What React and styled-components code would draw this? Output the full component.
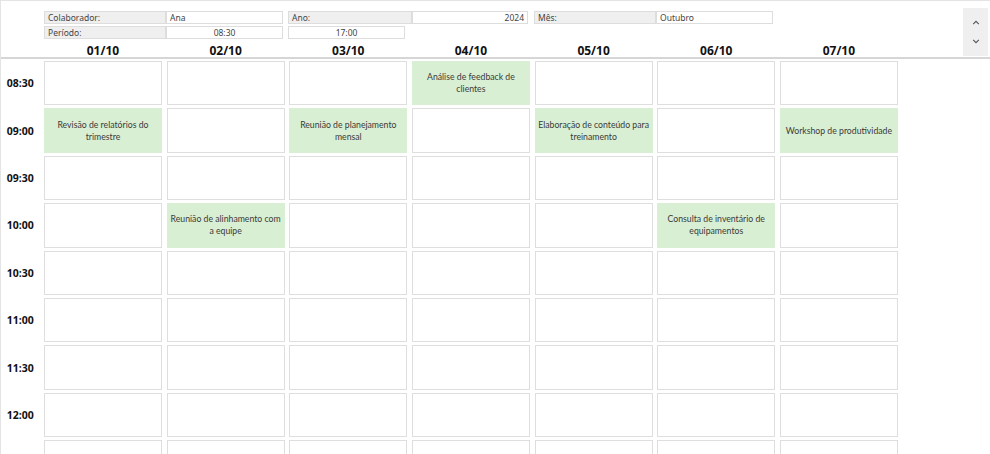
import React from 'react';
import styled, { createGlobalStyle } from 'styled-components';

const GlobalStyle = createGlobalStyle`
  html, body {
    margin: 0;
    padding: 0;
    background: #fff;
  }
  body {
    font-family: "Noto Sans", "Open Sans", sans-serif;
    color: #333;
  }
`;

const days = ['01/10', '02/10', '03/10', '04/10', '05/10', '06/10', '07/10'];
const times = ['08:30', '09:00', '09:30', '10:00', '10:30', '11:00', '11:30', '12:00', ''];

const events = {
  '08:30-3': 'Análise de feedback de clientes',
  '09:00-0': 'Revisão de relatórios do trimestre',
  '09:00-2': 'Reunião de planejamento mensal',
  '09:00-4': 'Elaboração de conteúdo para treinamento',
  '09:00-6': 'Workshop de produtividade',
  '10:00-1': 'Reunião de alinhamento com a equipe',
  '10:00-5': 'Consulta de inventário de equipamentos',
};

function App() {
  return (
    <>
      <GlobalStyle />
      <Styled.Page>
        <Styled.Header>
          <Styled.Fields>
            <Styled.FieldRow>
              <Styled.Label $w={122}>Colaborador:</Styled.Label>
              <Styled.Value $w={117}>Ana</Styled.Value>
              <Styled.Label $w={124} $ml={5}>Ano:</Styled.Label>
              <Styled.Value $w={116} $align="right">2024</Styled.Value>
              <Styled.Label $w={122} $ml={6}>Mês:</Styled.Label>
              <Styled.Value $w={117}>Outubro</Styled.Value>
            </Styled.FieldRow>
            <Styled.FieldRow>
              <Styled.Label $w={122}>Período:</Styled.Label>
              <Styled.Value $w={117} $align="center">08:30</Styled.Value>
              <Styled.Value $w={117} $ml={5} $align="center">17:00</Styled.Value>
            </Styled.FieldRow>
          </Styled.Fields>
          <Styled.Scroller>
            <Styled.Chevron viewBox="0 0 10 6">
              <path d="M1.5 5 L5 1.5 L8.5 5" />
            </Styled.Chevron>
            <Styled.Chevron viewBox="0 0 10 6">
              <path d="M1.5 1 L5 4.5 L8.5 1" />
            </Styled.Chevron>
          </Styled.Scroller>
        </Styled.Header>

        <Styled.DayRow>
          <span />
          {days.map((d) => (
            <Styled.Day key={d}>{d}</Styled.Day>
          ))}
        </Styled.DayRow>

        <Styled.Grid>
          {times.map((t, r) => (
            <React.Fragment key={r}>
              <Styled.Time>{t}</Styled.Time>
              {days.map((d, i) => {
                const ev = events[`${t}-${i}`];
                return (
                  <Styled.Cell key={d} $busy={!!ev}>
                    {ev}
                  </Styled.Cell>
                );
              })}
            </React.Fragment>
          ))}
        </Styled.Grid>
      </Styled.Page>
    </>
  );
}

const Styled = {
  Page: styled.div`
    width: 990px;
    height: 454px;
    overflow: hidden;
    box-sizing: border-box;
    border-top: 1px solid #e4e4e4;
    border-left: 1px solid #e4e4e4;
  `,

  Header: styled.div`
    display: flex;
    justify-content: space-between;
    padding: 10px 2px 0 43px;
    height: 33px;
  `,

  Fields: styled.div`
    display: flex;
    flex-direction: column;
    gap: 2px;
  `,

  FieldRow: styled.div`
    display: flex;
  `,

  Label: styled.div`
    box-sizing: border-box;
    width: ${(p) => p.$w}px;
    margin-left: ${(p) => p.$ml || 0}px;
    height: 13px;
    padding: 0 3px;
    background: #efefef;
    border: 1px solid #dddddd;
    font-size: 8.5px;
    line-height: 11px;
    color: #444;
  `,

  Value: styled.div`
    box-sizing: border-box;
    width: ${(p) => p.$w}px;
    margin-left: ${(p) => p.$ml || 0}px;
    height: 13px;
    padding: 0 3px;
    background: #fff;
    border: 1px solid #dddddd;
    font-size: 8.5px;
    line-height: 11px;
    color: #444;
    text-align: ${(p) => p.$align || 'left'};
  `,

  Scroller: styled.div`
    width: 25px;
    height: 48px;
    margin-top: -3px;
    background: #efefef;
    display: flex;
    flex-direction: column;
    align-items: center;
    justify-content: center;
    gap: 14px;
  `,

  Chevron: styled.svg`
    width: 8px;
    height: 5px;
    fill: none;
    stroke: #555;
    stroke-width: 1.4;
  `,

  DayRow: styled.div`
    display: grid;
    grid-template-columns: 38.3px repeat(7, 118px);
    column-gap: 4.67px;
    height: 13px;
    border-bottom: 2px solid #d6d6d6;
  `,

  Day: styled.div`
    text-align: center;
    font-family: "Open Sans", "Noto Sans", sans-serif;
    font-weight: 700;
    font-size: 12px;
    line-height: 13px;
    color: #111;
  `,

  Grid: styled.div`
    display: grid;
    grid-template-columns: 38.3px repeat(7, 118px);
    grid-auto-rows: 44.4px;
    column-gap: 4.67px;
    row-gap: 3px;
    padding-top: 2px;
  `,

  Time: styled.div`
    display: flex;
    align-items: center;
    justify-content: center;
    font-family: "Open Sans", "Noto Sans", sans-serif;
    font-weight: 700;
    font-size: 10.5px;
    color: #111;
  `,

  Cell: styled.div`
    box-sizing: border-box;
    display: flex;
    align-items: center;
    justify-content: center;
    text-align: center;
    padding: 0 1px;
    background: ${(p) => (p.$busy ? '#d9efd3' : '#fff')};
    border: 1px solid ${(p) => (p.$busy ? '#d9efd3' : '#dedede')};
    font-family: "Lato", "Noto Sans", sans-serif;
    font-size: 8.7px;
    line-height: 12px;
    color: #3a3a3a;
  `,
};

export default App;
